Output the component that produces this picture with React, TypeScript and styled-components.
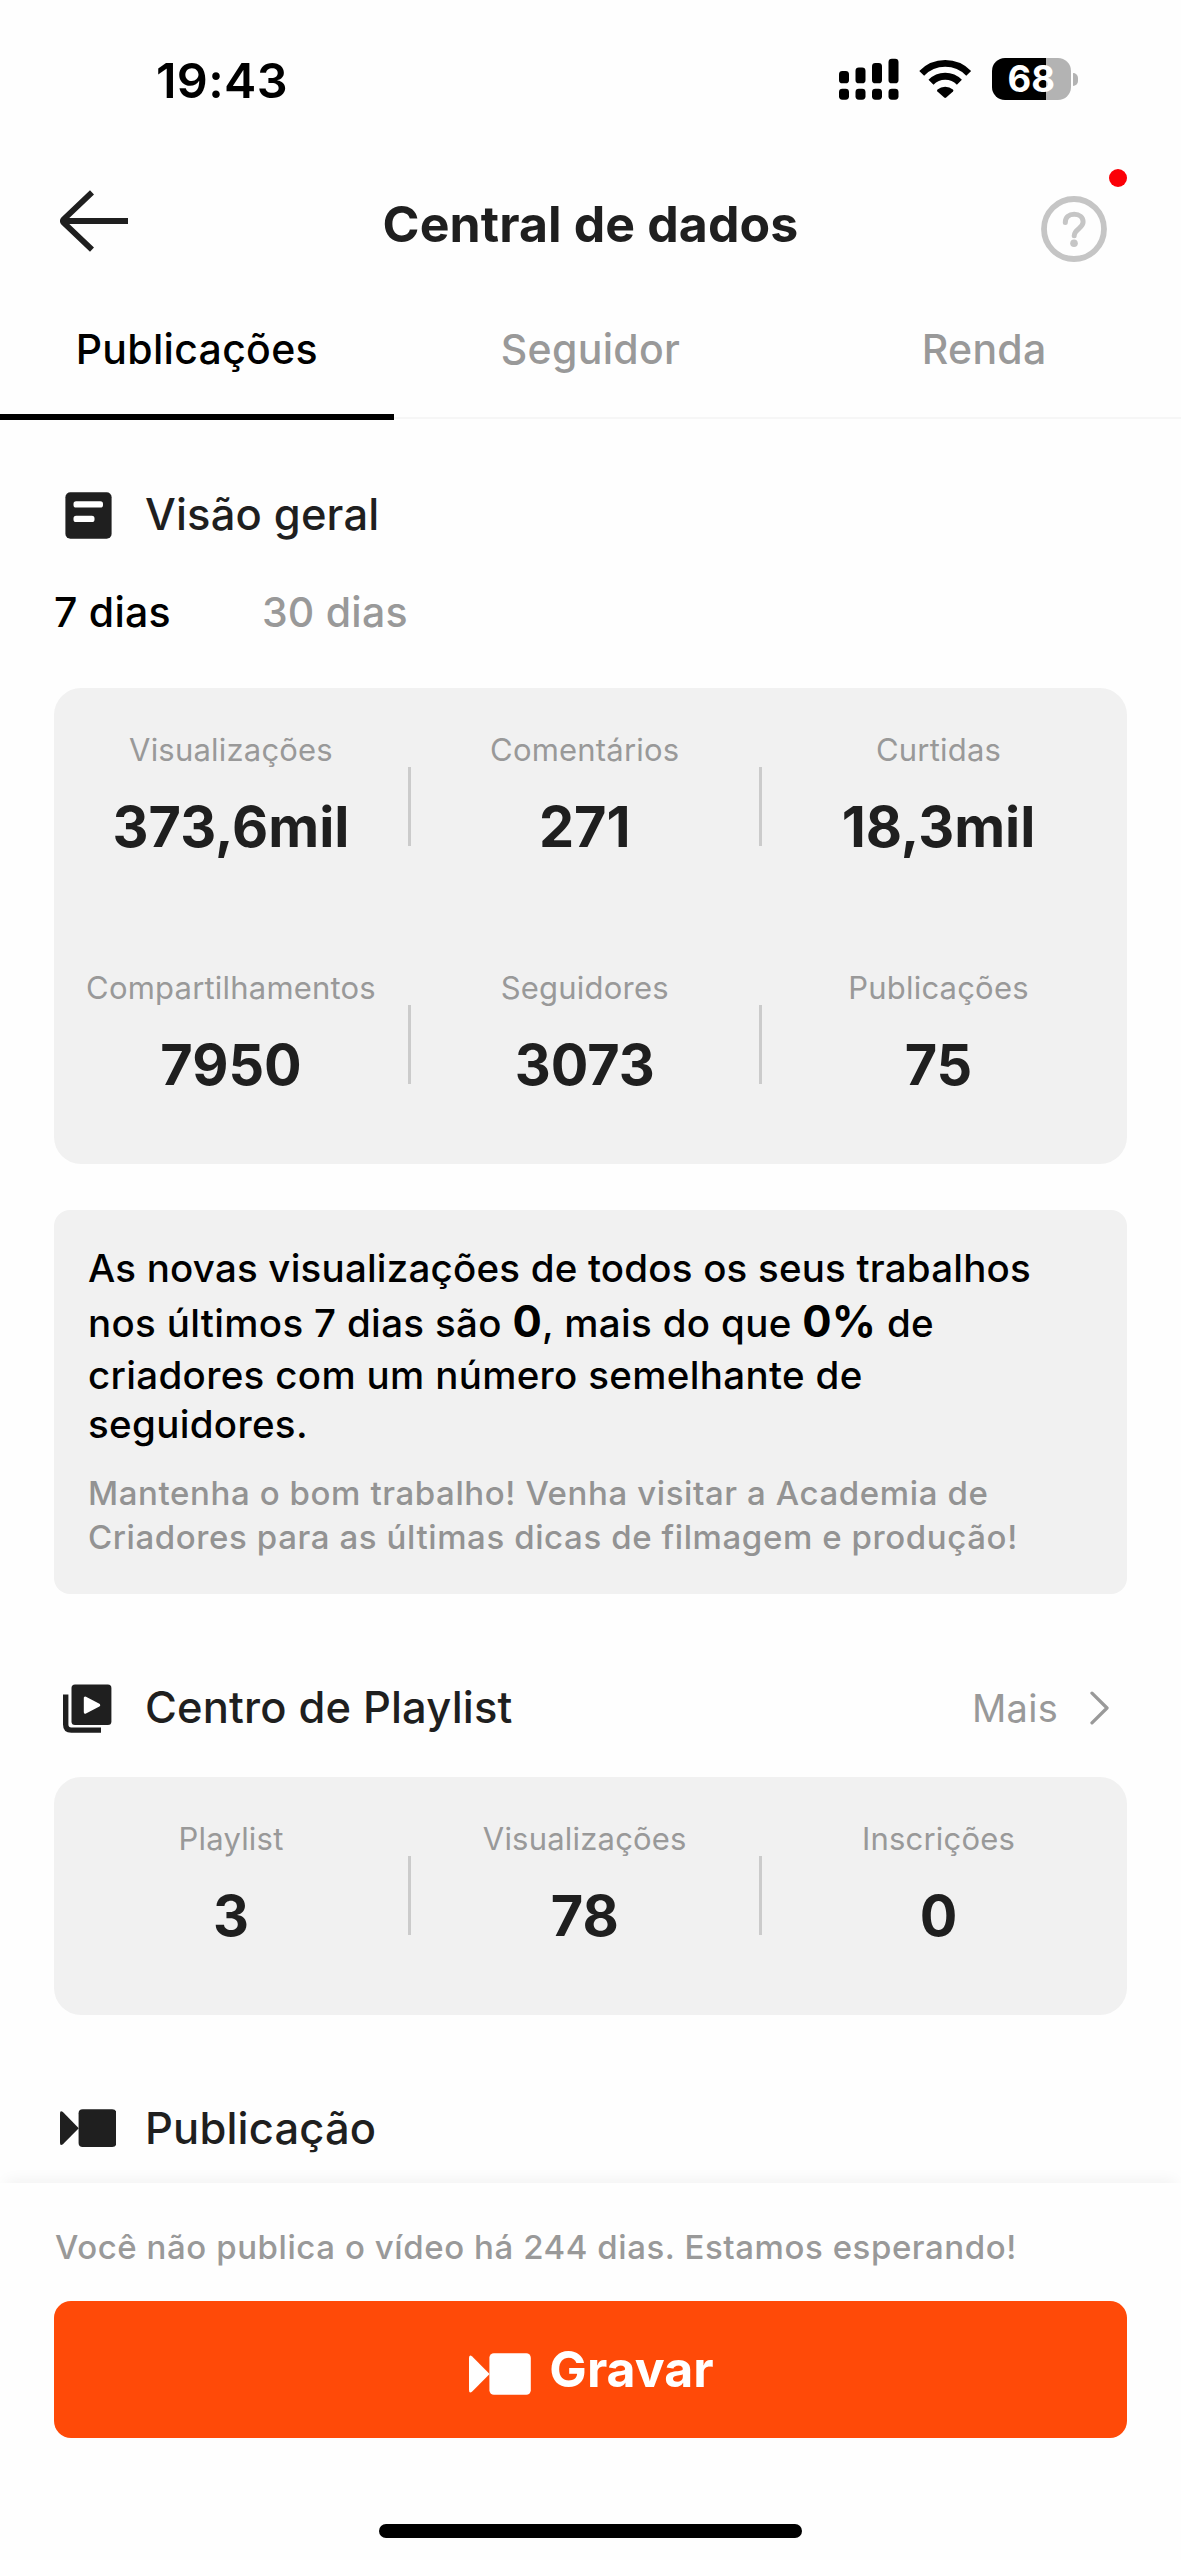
import React from "react";
import styled, { createGlobalStyle } from "styled-components";

const color = {
  text: "#1f1f1f",
  black: "#000",
  muted: "#999",
  card: "#f1f1f1",
  line: "#cbcbcb",
  accent: "#ff4a08",
};

const GlobalStyle = createGlobalStyle`
  *, *::before, *::after { box-sizing: border-box; }
  body { margin: 0; background: #fefefe; }
`;

const Screen = styled.div`
  display: flex;
  flex-direction: column;
  width: 1181px;
  height: 2560px;
  overflow: hidden;
  background: #fefefe;
  color: ${color.text};
  font-family: Inter, "Liberation Sans", sans-serif;
  white-space: nowrap;
`;

/* ---------- Status bar ---------- */

const StatusBar = styled.div`
  display: flex;
  flex: none;
  align-items: center;
  justify-content: space-between;
  height: 160px;
  padding: 0 103px 0 156px;
`;

const Clock = styled.span`
  margin-top: 2px;
  font-size: 48.5px;
  font-weight: 600;
  line-height: 60px;
  letter-spacing: 0.35px;
  color: ${color.black};
`;

const StatusIcons = styled.div`
  display: flex;
  align-items: center;
  gap: 20.5px;
  height: 42px;
  margin-bottom: 2px;

  svg { display: block; }
`;

const Battery = styled.div`
  display: flex;
  align-items: center;
  gap: 2.5px;
`;

const BatteryBody = styled.div<{ $level: number }>`
  display: flex;
  align-items: center;
  justify-content: center;
  width: 78.5px;
  height: 41.5px;
  border-radius: 13px;
  background: linear-gradient(to right, #000 ${(p) => p.$level}%, #b3b3b3 ${(p) => p.$level}%);
  color: #fff;
  font-size: 36.5px;
  font-weight: 700;
  line-height: 42px;
`;

const BatteryTip = styled.div`
  width: 5px;
  height: 13px;
  border-radius: 0 5px 5px 0;
  background: #b3b3b3;
`;

/* ---------- Navigation ---------- */

const NavBar = styled.header`
  display: grid;
  flex: none;
  grid-template-columns: 1fr auto 1fr;
  align-items: center;
  height: 128px;
`;

const BackButton = styled.button`
  justify-self: start;
  margin: 0 0 6px 58px;
  padding: 0;
  border: 0;
  background: none;

  svg { display: block; }
`;

const Title = styled.h1`
  margin: 0;
  font-size: 50px;
  font-weight: 700;
  line-height: 64px;
  letter-spacing: 0.1px;
`;

const HelpButton = styled.button`
  position: relative;
  justify-self: end;
  margin: 10px 73.6px 0 0;
  padding: 0;
  border: 0;
  background: none;

  svg { display: block; }
`;

const Badge = styled.span`
  position: absolute;
  top: -27px;
  right: -19.6px;
  width: 18px;
  height: 18px;
  border-radius: 50%;
  background: #fb0007;
`;

const Tabs = styled.nav`
  display: grid;
  flex: none;
  grid-template-columns: repeat(3, 1fr);
  height: 132px;
  background: linear-gradient(#f6f6f6, #f6f6f6) no-repeat 0 129px / 100% 2px;
`;

const Tab = styled.button<{ $active?: boolean }>`
  display: flex;
  align-items: center;
  justify-content: center;
  padding: 0 0 4px;
  border: 0;
  border-bottom: 6px solid ${(p) => (p.$active ? color.black : "transparent")};
  background: none;
  color: ${(p) => (p.$active ? color.black : color.muted)};
  font: 500 41px/50px Inter, "Liberation Sans", sans-serif;
  letter-spacing: 0.3px;
`;

/* ---------- Content ---------- */

const Content = styled.main`
  flex: 1;
  min-height: 0;
  padding: 65px 54px 0;
`;

const SectionHeader = styled.div<{ $top?: number }>`
  display: flex;
  align-items: center;
  height: 60px;
  margin-top: ${(p) => p.$top ?? 0}px;
  padding: 0 17px 0 4px;
`;

const IconSlot = styled.span`
  display: flex;
  align-items: center;
  justify-content: center;
  width: 60px;
  height: 60px;
  margin-right: 27px;
`;

const SectionTitle = styled.h2`
  flex: 1;
  margin: 0 0 2px;
  font-size: 43.5px;
  font-weight: 500;
  line-height: 56px;
  letter-spacing: 0.16px;
`;

const MoreLink = styled.a`
  display: flex;
  align-items: center;
  gap: 32px;
  color: ${color.muted};
  font-size: 38px;
  line-height: 50px;
  letter-spacing: 0.3px;
`;

const Periods = styled.div`
  display: flex;
  gap: 91px;
  margin: 42px 0 51px;
`;

const Period = styled.span<{ $active?: boolean }>`
  color: ${(p) => (p.$active ? color.black : color.muted)};
  font-size: 41px;
  font-weight: 500;
  line-height: 50px;
  letter-spacing: 0.25px;
`;

const StatsCard = styled.section<{ $top?: number }>`
  margin-top: ${(p) => p.$top ?? 0}px;
  border-radius: 27px;
  background: ${color.card};
`;

const StatsRow = styled.div`
  display: grid;
  grid-template-columns: 354px 3px 347.5px 3px 354px;
  height: 238px;
`;

const Stat = styled.div`
  display: flex;
  flex-direction: column;
  align-items: center;
  padding-top: 42px;
`;

const StatLabel = styled.span`
  color: ${color.muted};
  font-size: 31px;
  line-height: 40px;
  letter-spacing: 0.2px;
`;

const StatValue = styled.span`
  margin-top: 24px;
  font-size: 55.8px;
  font-weight: 700;
  line-height: 66px;
`;

const StatDivider = styled.span`
  height: 79px;
  margin-top: 79px;
  background: ${color.line};
`;

const InsightCard = styled.section`
  height: 384.5px;
  margin-top: 45.5px;
  padding: 33px 34px;
  border-radius: 16px;
  background: ${color.card};
`;

const InsightLine = styled.div<{ $height: number; $tracking?: number }>`
  color: ${color.black};
  font-size: 38.5px;
  font-weight: 500;
  line-height: ${(p) => p.$height}px;
  letter-spacing: ${(p) => p.$tracking ?? 0.33}px;
`;

const Figure = styled.b`
  font-size: 43.5px;
  font-weight: 700;
  line-height: 0;
`;

const InsightHint = styled.p`
  margin: 20px 0 0;
  color: #939393;
  font-size: 33px;
  font-weight: 500;
  line-height: 44.3px;
  letter-spacing: 0.6px;
`;

/* ---------- Footer ---------- */

const Footer = styled.footer`
  position: relative;
  display: flex;
  flex: none;
  flex-direction: column;
  height: 376.7px;
  padding: 41.7px 54px 0;
  background: #fefefe;
  box-shadow: 0 -8px 14px -6px rgba(0, 0, 0, 0.06);
`;

const Reminder = styled.p`
  margin: 0;
  padding-left: 1px;
  color: ${color.muted};
  font-size: 33px;
  font-weight: 500;
  line-height: 44px;
  letter-spacing: 0.57px;
`;

const RecordButton = styled.button`
  display: flex;
  flex: none;
  align-items: center;
  justify-content: center;
  gap: 18px;
  height: 137.5px;
  margin-top: 31.6px;
  padding: 0 0 0 2px;
  border: 0;
  border-radius: 17px;
  background: ${color.accent};
  color: #fff;
  font: 700 50px/64px Inter, "Liberation Sans", sans-serif;

  svg { margin-top: 9px; }
`;

const HomeIndicator = styled.div`
  flex: none;
  align-self: center;
  width: 423px;
  height: 14px;
  margin-top: 85.5px;
  border-radius: 7px;
  background: #000;
`;

/* ---------- Icons ---------- */

const SIGNAL_BARS = [13, 9.5, 5, 0.7];

const SignalIcon = () => (
  <svg width="60" height="42" viewBox="0 0 60 42">
    {SIGNAL_BARS.map((top, i) => (
      <g key={top}>
        <rect x={i * 16.5} y={top} width="10" height={25.3 - top} rx="3.4" />
        <rect x={i * 16.5} y="30.7" width="10" height="11" rx="3.4" />
      </g>
    ))}
  </svg>
);

const WifiIcon = () => (
  <svg width="52.5" height="42" viewBox="0 0 52.5 42">
    <g fill="none" stroke="#000">
      <path d="M2.7 15.3a32.7 32.7 0 0 1 47 0" strokeWidth="6.8" />
      <path d="M12 24.2a19.8 19.8 0 0 1 28.4 0" strokeWidth="7" />
    </g>
    <path d="M18.4 33.4q-.9-1 .1-1.9a12 12 0 0 1 15.4 0q1 .9.1 1.9l-6.8 6.2q-1 .9-2 0z" />
  </svg>
);

const BackIcon = () => (
  <svg width="71" height="62" viewBox="0 0 71 62" fill="none" stroke={color.text} strokeWidth="5.8">
    <path d="M34 2.400 5.600 29.400q-1.600 1.600 0 3.200L34 59.600" strokeLinejoin="round" />
    <path d="M5 31h65" />
  </svg>
);

const HelpIcon = () => (
  <svg width="66" height="66" viewBox="0 0 66 66" fill="none" stroke="#c5c5c5">
    <circle cx="33" cy="33" r="30" strokeWidth="5.8" />
    <path
      d="M24.3 26.4c0-5 3.7-8.1 8.9-8.1 5.2 0 8.900 3.200 8.900 7.800 0 6.500-8.900 6.700-8.900 13.700"
      strokeWidth="5"
      strokeLinecap="round"
    />
    <circle cx="33" cy="47.2" r="3.8" fill="#c5c5c5" stroke="none" />
  </svg>
);

const OverviewIcon = () => (
  <svg width="60" height="60" viewBox="0 0 60 60">
    <rect x="7.4" y="7.2" width="46.2" height="46.6" rx="5" fill={color.text} />
    <rect x="15.5" y="16.3" width="29.5" height="6.2" rx="2.6" fill="#fff" />
    <rect x="15.5" y="30.8" width="21" height="6.2" rx="2.6" fill="#fff" />
  </svg>
);

const PlaylistIcon = () => (
  <svg width="60" height="60" viewBox="0 0 60 60">
    <path d="M7.7 16.5v30q0 5.600 5.600 5.600H43" fill="none" stroke={color.text} strokeWidth="5.4" />
    <rect x="13.5" y="6.5" width="39.9" height="40.4" rx="3.5" fill={color.text} />
    <path
      d="M27.3 20v14.2l13.4-7.1z"
      fill="#fff"
      stroke="#fff"
      strokeWidth="3"
      strokeLinejoin="round"
    />
  </svg>
);

const CameraIcon = ({ width, fill }: { width: number; fill: string }) => (
  <svg width={width} height={(width * 42) / 62} viewBox="0 0 62 42" fill={fill}>
    <path d="M0 5q0-4 3.200-1.600L20.600 21 3.200 38.600Q0 41 0 37z" />
    <rect x="20.4" y="0.2" width="41.4" height="41.6" rx="4.5" />
  </svg>
);

const ChevronIcon = () => (
  <svg width="20" height="34" viewBox="0 0 20 34" fill="none" stroke="#999" strokeWidth="3.3">
    <path d="M2 2.200 17 17 2 31.800" strokeLinecap="round" strokeLinejoin="round" />
  </svg>
);

/* ---------- Data ---------- */

type StatItem = { label: string; value: string };

const overview: StatItem[][] = [
  [
    { label: "Visualizações", value: "373,6mil" },
    { label: "Comentários", value: "271" },
    { label: "Curtidas", value: "18,3mil" },
  ],
  [
    { label: "Compartilhamentos", value: "7950" },
    { label: "Seguidores", value: "3073" },
    { label: "Publicações", value: "75" },
  ],
];

const playlist: StatItem[][] = [
  [
    { label: "Playlist", value: "3" },
    { label: "Visualizações", value: "78" },
    { label: "Inscrições", value: "0" },
  ],
];

const Stats = ({ rows, top }: { rows: StatItem[][]; top?: number }) => (
  <StatsCard $top={top}>
    {rows.map((row) => (
      <StatsRow key={row[0].label}>
        {row.map((item, i) => (
          <React.Fragment key={item.label}>
            {i > 0 && <StatDivider />}
            <Stat>
              <StatLabel>{item.label}</StatLabel>
              <StatValue>{item.value}</StatValue>
            </Stat>
          </React.Fragment>
        ))}
      </StatsRow>
    ))}
  </StatsCard>
);

export default function App() {
  return (
    <Screen>
      <GlobalStyle />
      <StatusBar>
        <Clock>19:43</Clock>
        <StatusIcons>
          <SignalIcon />
          <WifiIcon />
          <Battery>
            <BatteryBody $level={68}>68</BatteryBody>
            <BatteryTip />
          </Battery>
        </StatusIcons>
      </StatusBar>

      <NavBar>
        <BackButton aria-label="Voltar">
          <BackIcon />
        </BackButton>
        <Title>Central de dados</Title>
        <HelpButton aria-label="Ajuda">
          <HelpIcon />
          <Badge />
        </HelpButton>
      </NavBar>

      <Tabs>
        <Tab $active>Publicações</Tab>
        <Tab>Seguidor</Tab>
        <Tab>Renda</Tab>
      </Tabs>

      <Content>
        <SectionHeader>
          <IconSlot>
            <OverviewIcon />
          </IconSlot>
          <SectionTitle>Visão geral</SectionTitle>
        </SectionHeader>

        <Periods>
          <Period $active>7 dias</Period>
          <Period>30 dias</Period>
        </Periods>

        <Stats rows={overview} />

        <InsightCard>
          <InsightLine $height={50} $tracking={0.2}>
            As novas visualizações de todos os seus trabalhos
          </InsightLine>
          <InsightLine $height={60}>
            nos últimos 7 dias são <Figure>0</Figure>, mais do que <Figure>0%</Figure> de
          </InsightLine>
          <InsightLine $height={45}>criadores com um número semelhante de</InsightLine>
          <InsightLine $height={53}>seguidores.</InsightLine>
          <InsightHint>
            Mantenha o bom trabalho! Venha visitar a Academia de
            <br />
            Criadores para as últimas dicas de filmagem e produção!
          </InsightHint>
        </InsightCard>

        <SectionHeader $top={83.5}>
          <IconSlot>
            <PlaylistIcon />
          </IconSlot>
          <SectionTitle>Centro de Playlist</SectionTitle>
          <MoreLink>
            Mais
            <ChevronIcon />
          </MoreLink>
        </SectionHeader>

        <Stats rows={playlist} top={39.5} />

        <SectionHeader $top={83.5}>
          <IconSlot>
            <CameraIcon width={56.5} fill={color.text} />
          </IconSlot>
          <SectionTitle>Publicação</SectionTitle>
        </SectionHeader>
      </Content>

      <Footer>
        <Reminder>Você não publica o vídeo há 244 dias. Estamos esperando!</Reminder>
        <RecordButton>
          <CameraIcon width={62} fill="#fff" />
          Gravar
        </RecordButton>
        <HomeIndicator />
      </Footer>
    </Screen>
  );
}
